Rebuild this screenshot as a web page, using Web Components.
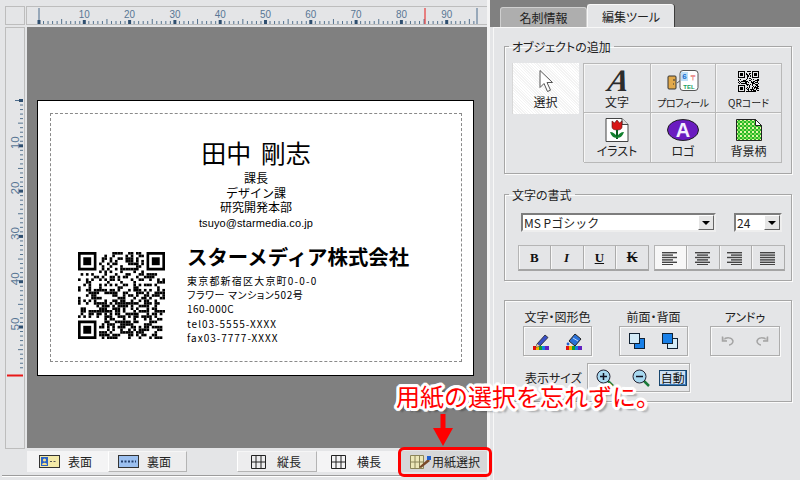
<!DOCTYPE html>
<html lang="ja">
<head>
<meta charset="utf-8">
<title>名刺</title>
<style>
html, body { margin: 0; padding: 0; width: 800px; height: 480px; overflow: hidden; background: #e4e5e7; }
</style>
</head>
<body>
<bc-app></bc-app>
<script>
const FONT = '"Noto Sans CJK JP", "Liberation Sans", sans-serif';

class Ruler extends HTMLElement {
	connectedCallback() {
		const vertical = this.hasAttribute('vertical');
		const len = vertical ? 420 : 460;
		const start = Number(this.getAttribute('start'));
		const stop = Number(this.getAttribute('stop'));
		const red = Number(this.getAttribute('red'));
		const step = 4.53;
		let marks = '';
		const line = (p, from, to, color, w) => vertical
			? `<line x1="${from}" x2="${to}" y1="${p}" y2="${p}" stroke="${color}" stroke-width="${w}"/>`
			: `<line x1="${p}" x2="${p}" y1="${from}" y2="${to}" stroke="${color}" stroke-width="${w}"/>`;
		for (let i = 0; start + i * step < stop - 1; i++) {
			const p = start + i * step;
			if (i == 0) marks += line(p, vertical ? 9 : 1, 17, '#4d6c8c', 1);
			if (i % 10 == 0) {
				marks += line(p, 13, 17, '#2f4f70', 3);
				if (i > 0) {
					const label = String(i);
					marks += vertical
						? `<text transform="translate(12.5 ${p - 3}) rotate(-90)" text-anchor="middle" textLength="13" lengthAdjust="spacingAndGlyphs">${label}</text>`
						: `<text x="${p}" y="11" text-anchor="middle" textLength="11" lengthAdjust="spacingAndGlyphs">${label}</text>`;
				}
			} else {
				marks += line(p, i % 5 == 0 ? 12 : 14, 17, '#55738f', 1);
			}
		}
		if (!vertical) marks += line(stop, 1, 17, '#4d6c8c', 1);
		marks += line(red, 1, 17, '#e81818', vertical ? 2 : 1);
		this.attachShadow({mode: 'open'}).innerHTML = `
		<style>
		:host { display: block; background: #e4e5e7; box-sizing: border-box; overflow: hidden; outline: 1px solid #bdbdbd; }
		svg { display: block; }
		text { font: 11px "Liberation Sans", sans-serif; fill: #587694; }
		</style>
		<svg width="${vertical ? 18 : len}" height="${vertical ? len : 17}">${marks}</svg>`;
	}
}
customElements.define('bc-ruler', Ruler);

class QrCode extends HTMLElement {
	connectedCallback() {
		const size = Number(this.getAttribute('size'));
		const n = Number(this.getAttribute('modules'));
		let seed = Number(this.getAttribute('seed') || 7);
		const rnd = () => { seed = (seed * 1103515245 + 12345) & 0x7fffffff; return (seed >> 12) % 100 / 100; };
		const finder = (x, y) => `<path d="M${x} ${y}h7v7h-7zM${x + 1} ${y + 1}v5h5v-5z" fill-rule="evenodd"/><rect x="${x + 2}" y="${y + 2}" width="3" height="3"/>`;
		let cells = finder(0, 0) + finder(n - 7, 0) + finder(0, n - 7);
		for (let y = 0; y < n; y++) {
			for (let x = 0; x < n; x++) {
				const inFinder = (x < 8 && y < 8) || (x >= n - 8 && y < 8) || (x < 8 && y >= n - 8);
				if (!inFinder && rnd() > 0.5) cells += `<rect x="${x}" y="${y}" width="1" height="1"/>`;
			}
		}
		this.attachShadow({mode: 'open'}).innerHTML = `
		<style>:host { display: block; width: ${size}px; height: ${size}px; } svg { display: block; }</style>
		<svg width="${size}" height="${size}" viewBox="0 0 ${n} ${n}" fill="#000">${cells}</svg>`;
	}
}
customElements.define('bc-qr', QrCode);

const cardTemplate = document.createElement('template');
cardTemplate.innerHTML = `
<style>
:host { display: block; width: 437px; height: 276px; box-sizing: border-box; background: #fff; border: 1px solid #000; padding: 12px 11px 13px 12px; font-family: ${FONT}; color: #000; }
.safe { height: 100%; box-sizing: border-box; border: 1px dashed #8a8a8a; padding-top: 24px; }
.name { font-size: 25px; line-height: 28px; text-align: center; word-spacing: 4px; }
.dept { margin-top: 6px; font: 12px/14.5px "Liberation Sans", "Noto Sans CJK JP", sans-serif; text-align: center; }
.mail { font: 11px/14.5px "Liberation Sans", sans-serif; letter-spacing: .1px; }
.lower { display: flex; gap: 22px; margin-top: 14px; padding-left: 27px; }
bc-qr { margin-top: 8px; }
.company { font-size: 20.4px; font-weight: 700; line-height: 24px; white-space: nowrap; font-feature-settings: normal; }
.address { margin-top: 6px; font-size: 10px; line-height: 14.2px; white-space: nowrap; }
.a1 { letter-spacing: 1.2px; }
.a2 { letter-spacing: .6px; }
.a3 { letter-spacing: .5px; }
.a4 { letter-spacing: 1px; }
</style>
<div class="safe">
	<div class="name">田中 剛志</div>
	<div class="dept">課長<br>デザイン課<br>研究開発本部<br><span class="mail">tsuyo@starmedia.co.jp</span></div>
	<div class="lower">
		<bc-qr size="87" modules="33"></bc-qr>
		<div>
			<div class="company">スターメディア株式会社</div>
			<div class="address"><span class="a1">東京都新宿区大京町0-0-0</span><br><span class="a2">フラワー マンション502号</span><br><span class="a3">160-000C</span><br><span class="a4">tel03-5555-XXXX</span><br><span class="a4">fax03-7777-XXXX</span></div>
		</div>
	</div>
</div>`;
class BusinessCard extends HTMLElement {
	constructor() {
		super();
		this.attachShadow({mode: 'open'}).appendChild(cardTemplate.content.cloneNode(true));
	}
}
customElements.define('bc-card', BusinessCard);

// bottom bar button under the canvas
const tabTemplate = document.createElement('template');
tabTemplate.innerHTML = `
<style>
:host { display: flex; align-items: center; box-sizing: border-box; height: 21px; font-size: 12px; color: #222; background: #ededee; border: 1px solid #b4b4b4; border-left-color: #fff; border-top-color: #f6f6f6; }
:host([active]) { background: #f4f4f5; border-color: #f4f4f5; }
:host([plain]) { background: #d6d7d8; border-color: #d6d7d8; }
.ic { display: flex; }
</style>
<span class="ic"><slot name="icon"></slot></span><slot></slot>`;
class BottomTab extends HTMLElement {
	constructor() {
		super();
		this.attachShadow({mode: 'open'}).appendChild(tabTemplate.content.cloneNode(true));
	}
}
customElements.define('bc-tab', BottomTab);

const groupTemplate = document.createElement('template');
groupTemplate.innerHTML = `
<style>
:host { display: block; width: 288px; }
fieldset { margin: 0; min-width: 0; box-sizing: border-box; border: 1px solid #a6a6a6; box-shadow: inset 1px 1px #fbfbfb, 1px 1px #fbfbfb; padding: 0; height: var(--h, auto); }
legend { margin-left: 4px; padding: 0 3px; font-size: 12px; line-height: 17px; color: #222; }
legend:empty { display: none; }
.body { padding: var(--pad, 0); }
</style>
<fieldset><legend></legend><div class="body"><slot></slot></div></fieldset>`;
class Group extends HTMLElement {
	constructor() {
		super();
		this.attachShadow({mode: 'open'}).appendChild(groupTemplate.content.cloneNode(true));
	}
	connectedCallback() {
		this.shadowRoot.querySelector('legend').textContent = this.getAttribute('legend') || '';
	}
}
customElements.define('bc-group', Group);

const toolTemplate = document.createElement('template');
toolTemplate.innerHTML = `
<style>
:host { display: flex; flex-direction: column; align-items: center; box-sizing: border-box; font-size: 12px; line-height: 14px; color: #222; white-space: nowrap; border-right: 1px solid #b8b8b8; border-bottom: 1px solid #b8b8b8; box-shadow: inset 1px 1px #f6f6f6; padding-top: 5px; }
:host([active]) { border: 0; background: #f7f7f7; box-shadow: inset 1px 0 #d8d8d8; padding-top: 6px; }
.ic { display: flex; height: 24px; align-items: center; }
.t { margin-top: 2px; }
</style>
<span class="ic"><slot name="icon"></slot></span><span class="t"><slot></slot></span>`;
class Tool extends HTMLElement {
	constructor() {
		super();
		this.attachShadow({mode: 'open'}).appendChild(toolTemplate.content.cloneNode(true));
	}
}
customElements.define('bc-tool', Tool);

class Combo extends HTMLElement {
	connectedCallback() {
		this.attachShadow({mode: 'open'}).innerHTML = `
		<style>
		:host { display: flex; box-sizing: border-box; height: 19px; background: #fff; border: 2px solid #7d7d7d; border-right-color: #eee; border-bottom-color: #eee; font: 12px/15px ${FONT}; color: #222; padding-left: 1px; }
		.v { flex: 1; white-space: nowrap; }
		.b { width: 16px; height: 15px; background: #e6e6e6; border: 1px solid; border-color: #fff #666 #666 #fff; box-sizing: border-box; display: flex; align-items: center; justify-content: center; }
		.b i { border: 4px solid transparent; border-top: 4px solid #000; border-bottom: 0; }
		</style>
		<span class="v">${this.getAttribute('value')}</span><span class="b"><i></i></span>`;
	}
}
customElements.define('bc-combo', Combo);

const segTemplate = document.createElement('template');
segTemplate.innerHTML = `
<style>
:host { display: flex; align-items: center; justify-content: center; box-sizing: border-box; width: 32.75px; height: 26px; font: 700 13px/1 "Liberation Serif", serif; color: #111; border-right: 1px solid #ababab; border-bottom: 2px solid #a4a4a4; border-top: 1px solid #b5b5b5; box-shadow: inset 1px 0 #f7f7f7; }
:host(:first-child) { border-left: 1px solid #b5b5b5; }
:host([active]) { background: #f7f7f7; }
</style>
<slot></slot>`;
class SegButton extends HTMLElement {
	constructor() {
		super();
		this.attachShadow({mode: 'open'}).appendChild(segTemplate.content.cloneNode(true));
	}
}
customElements.define('bc-seg', SegButton);

// etched box round the colour, order and undo icons
const etchTemplate = document.createElement('template');
etchTemplate.innerHTML = `
<style>
:host { display: flex; align-items: center; box-sizing: border-box; border: 1px solid #adadad; box-shadow: inset 1px 1px #fafafa, 1px 1px #fafafa; }
</style>
<slot></slot>`;
class EtchBox extends HTMLElement {
	constructor() {
		super();
		this.attachShadow({mode: 'open'}).appendChild(etchTemplate.content.cloneNode(true));
	}
}
customElements.define('bc-etch', EtchBox);

const rainbow = `<rect x="0" y="13" width="3" height="4" fill="#e01010"/><rect x="3" y="13" width="3" height="4" fill="#f0b000"/><rect x="6" y="13" width="3" height="4" fill="#10a030"/><rect x="9" y="13" width="3" height="4" fill="#1080e0"/><rect x="12" y="13" width="4" height="4" fill="#6020c0"/>`;
const alignIcon = (rows) => `<svg width="16" height="14">${rows.map((r, i) => `<rect x="${r[0]}" y="${i * 2.4 + 1}" width="${r[1]}" height="1.4" fill="#444"/>`).join('')}</svg>`;
const pageGrid = `<svg width="15" height="14"><path d="M.5 .5h14v13H.5zM5 .5v13M10 .5v13M.5 7h14" fill="none" stroke="#222"/></svg>`;

const appTemplate = document.createElement('template');
appTemplate.innerHTML = `
<style>
:host { display: grid; grid-template-columns: 490px 310px; width: 800px; height: 480px; position: relative; overflow: hidden; font-family: ${FONT}; font-feature-settings: "palt"; background: #e4e5e7; }
.left { display: grid; grid-template-columns: 18px 460px; grid-template-rows: 17px 421px 21px; column-gap: 3px; row-gap: 3px; padding: 7px 0 0 6px; height: 473px; box-sizing: border-box; position: relative; }
.canvas { background: #808080; padding: 73px 0 0 10px; grid-row: 2; grid-column: 2; }
.vr { grid-row: 2; grid-column: 1; margin-top: 1px; height: 420px; }
.corner { outline: 1px solid #bdbdbd; }
.bottom { grid-row: 3; grid-column: 2; display: flex; }
.bottom bc-tab { flex: none; }
.bottom svg { display: block; }
.rule { position: absolute; left: 2px; right: 2px; top: 475px; height: 1px; background: #9c9c9c; box-shadow: 0 1px #fff; }
.edge { position: absolute; left: 487px; top: 0; width: 3px; height: 480px; background: #f4f4f4; }
.right { background: #e4e5e7; display: flex; flex-direction: column; height: 480px; }
.strip { height: 27px; background: #808080; display: flex; align-items: flex-end; padding-left: 10px; flex: none; }
.strip div { width: 87px; text-align: center; box-sizing: border-box; font-size: 12px; color: #222; }
.strip .off { height: 20px; line-height: 19px; background: #aeaeae; border: 1px solid #cfcfcf; border-bottom: 0; border-radius: 3px 3px 0 0; }
.strip .on { height: 23px; line-height: 23px; background: #e4e5e7; border-top: 1px solid #f8f8f8; border-left: 1px solid #f8f8f8; box-shadow: 1px 0 #3c3c3c; border-radius: 3px 3px 0 0; }
.panel { flex: 1; margin-left: 3px; border-left: 1px solid #f8f8f8; border-top: 1px solid #f8f8f8; padding: 10px 0 0 10px; box-sizing: border-box; }
.g1 { --pad: 8px 0 10px 7px; --h: 136px; height: 137px; }
.g2 { --pad: 10px 0 9px 15px; --h: 95px; margin-top: 11px; height: 96px; }
.g3 { --pad: 8px 0 0 18px; --h: 102px; margin-top: 18px; }
.tools { display: flex; gap: 4px; }
.sel { width: 67px; height: 51px; background-image: repeating-linear-gradient(45deg, #fff 0 1px, #f3f3f3 1px 2px); }
.tgrid { display: grid; grid-template-columns: 67px 65px 66px; grid-template-rows: 49px 50px; border-left: 1px solid #b8b8b8; border-top: 1px solid #b8b8b8; height: 99px; box-sizing: border-box; }
.tiny { font-size: 10px; white-space: nowrap; }
.big-a { display: block; margin: -6px 0; }
.combos { display: flex; gap: 18px; padding-left: 1px; }
.segs { display: flex; gap: 5px; margin-top: 13px; margin-left: -2px; }
.segrow { display: flex; }
.b { font-weight: 700; }
.i { font-style: italic; }
.u { text-decoration: underline; }
.k { text-decoration: line-through; font-size: 14px; }
.cols { display: flex; }
.col { display: flex; flex-direction: column; width: 69px; align-items: center; font-size: 12px; line-height: 16px; color: #222; white-space: nowrap; }
.col bc-etch { width: 100%; height: 30px; margin-top: 1px; justify-content: center; gap: 17px; }
.col bc-etch.wide { gap: 20px; }
.zoomrow { display: flex; align-items: center; margin-top: 7px; font-size: 12px; color: #222; gap: 5px; padding-left: 2px; }
.zoomrow bc-etch { width: 103px; height: 29px; gap: 18px; padding-left: 8px; }
.auto { font-size: 12px; line-height: 14px; margin-left: -9px; padding: 0 1px; border: 1px solid #16456e; background: #cfe0f2; color: #111; box-shadow: inset -1px -1px #3a78b8; white-space: nowrap; }
.frame { position: absolute; left: 398px; top: 447px; width: 94px; height: 30px; box-sizing: border-box; border: 3px solid #f00; border-radius: 6px; }
.arrow { position: absolute; left: 433px; top: 414px; }
.note { position: absolute; left: 396px; top: 380px; font-size: 24px; line-height: 32px; color: #f00; white-space: nowrap; font-feature-settings: normal;
	text-shadow: 3px 0 #fff, -3px 0 #fff, 0 3px #fff, 0 -3px #fff, 2px 2px #fff, -2px 2px #fff, 2px -2px #fff, -2px -2px #fff, 3px 1px #fff, -3px 1px #fff, 3px -1px #fff, -3px -1px #fff, 1px 3px #fff, -1px 3px #fff, 1px -3px #fff, -1px -3px #fff, 4px 4px 2px rgba(0,0,0,.35); }
</style>
<div class="left">
	<div class="corner"></div>
	<bc-ruler start="12" stop="450" red="398"></bc-ruler>
	<bc-ruler class="vr" vertical start="72.5" stop="345" red="347.5"></bc-ruler>
	<div class="canvas"><bc-card></bc-card></div>
	<div class="bottom">
		<bc-tab active style="width:81px;padding-left:11px;gap:8px">
			<svg slot="icon" width="21" height="13"><rect x=".5" y=".5" width="20" height="12" fill="#f3e9a8" stroke="#333"/><rect x="2" y="2" width="7" height="9" fill="#2a62c8"/><circle cx="5.5" cy="5" r="1.6" fill="#f4e08a"/><path d="M3 10c0-3 5-3 5 0z" fill="#f4e08a"/><path d="M11 6.500h7" stroke="#555" stroke-dasharray="2 1.500"/></svg>表面</bc-tab>
		<bc-tab style="width:79px;padding-left:9px;gap:8px">
			<svg slot="icon" width="21" height="13"><rect x=".5" y=".5" width="20" height="12" fill="#9cc0f0" stroke="#333"/><path d="M3 6.500h15" stroke="#24406e" stroke-width="2" stroke-dasharray="2 1.500"/></svg>裏面</bc-tab>
		<div style="width:50px"></div>
		<bc-tab style="width:80px;padding-left:13px;gap:11px"><span slot="icon" id="g1"></span>縦長</bc-tab>
		<bc-tab active style="width:81px;padding-left:13px;gap:11px"><span slot="icon" id="g2"></span>横長</bc-tab>
		<bc-tab plain style="width:89px;padding-left:11px">
			<svg slot="icon" width="22" height="14"><path d="M.5 .5h13v13H.5zM5 .5v13M9.500 .5v13M.5 7h13" fill="#ece7b8" stroke="#8a8458"/><path d="M9 12l9-8 2 2-9 7z" fill="#7a4a28"/><rect x="17" y="1" width="4" height="4" fill="#2060d0"/></svg>用紙選択</bc-tab>
	</div>
	<div class="rule"></div>
	<div class="edge"></div>
</div>
<div class="right">
	<div class="strip"><div class="off">名刺情報</div><div class="on">編集ツール</div></div>
	<div class="panel">
		<bc-group class="g1" legend="オブジェクトの追加">
			<div class="tools">
				<bc-tool class="sel" active>
					<svg slot="icon" width="16" height="24"><path d="M2 1.500v17l4-4 3.500 8 3-1.300-3.500-7.700h5.500z" fill="#fff" stroke="#555"/></svg>選択</bc-tool>
				<div class="tgrid">
					<bc-tool>
						<svg class="big-a" slot="icon" width="30" height="36"><text x="0" y="0" transform="translate(15 28) skewX(-10)" text-anchor="middle" font-family="Liberation Serif" font-weight="700" font-style="italic" font-size="31" fill="#2c2c2c">A</text></svg>文字</bc-tool>
					<bc-tool>
						<svg slot="icon" width="32" height="24"><rect x="1" y="7" width="8" height="13" rx="1" fill="#e2a94a" stroke="#333"/><path d="M6 11h2M6 15h1" stroke="#333"/><path d="M10 14l4-3" stroke="#555"/><rect x="13" y="1.500" width="18" height="20" rx="3" fill="#fff" stroke="#555"/><rect x="14" y="3" width="7" height="9" fill="#bfe0f8"/><text x="17.500" y="10" text-anchor="middle" font-family="Liberation Sans" font-weight="700" font-size="8" fill="#1a70d0">6</text><text x="26" y="11" text-anchor="middle" font-family="Noto Sans CJK JP" font-size="7" fill="#e04040">〒</text><text x="22" y="19.500" text-anchor="middle" font-family="Liberation Sans" font-weight="700" font-size="6" fill="#20a060">TEL</text></svg><span class="tiny" style="letter-spacing:-.4px">プロフィール</span></bc-tool>
					<bc-tool><bc-qr slot="icon" size="21" modules="21" seed="91"></bc-qr><span class="tiny">QRコード</span></bc-tool>
					<bc-tool>
						<svg slot="icon" width="24" height="24"><path d="M1 .5h16l6 6v17H1z" fill="#fff" stroke="#444"/><path d="M17 .5v6h6" fill="#ddd" stroke="#444"/><path d="M7 3l2.500 2 2.500-3 2.500 3 2.500-2v6c0 2-2 3-5 3s-5-1-5-3z" fill="#d81818" stroke="#501010" stroke-width=".6"/><path d="M12 12v9" stroke="#0a5a20" stroke-width="2"/><path d="M12 20c-4 0-6-3-7-6 3 0 6 2 7 5 1-3 4-5 7-5-1 3-3 6-7 6z" fill="#12802e"/></svg>イラスト</bc-tool>
					<bc-tool>
						<svg slot="icon" width="32" height="24"><ellipse cx="16" cy="12" rx="15.500" ry="10.500" fill="#6a1cc0" stroke="#222"/><text x="16" y="19" text-anchor="middle" font-family="Liberation Sans" font-weight="700" font-size="20" fill="#f4f0ff">A</text></svg>ロゴ</bc-tool>
					<bc-tool>
						<svg slot="icon" width="26" height="22"><defs><pattern id="chk" width="4" height="4" patternUnits="userSpaceOnUse"><rect width="4" height="4" fill="#2ab52a"/><rect width="2" height="2" fill="#e6f8a8"/><rect x="2" y="2" width="2" height="2" fill="#7ade50"/></pattern></defs><path d="M.5 .5h19l6 6v15H.5z" fill="url(#chk)" stroke="#222"/><path d="M19.500 .5v6h6z" fill="#fff" stroke="#222"/></svg>背景柄</bc-tool>
				</div>
			</div>
		</bc-group>
		<bc-group class="g2" legend="文字の書式">
			<div class="combos">
				<bc-combo style="width:195px" value="MS Pゴシック"></bc-combo>
				<bc-combo style="width:48px" value="24"></bc-combo>
			</div>
			<div class="segs">
				<div class="segrow">
					<bc-seg><span class="b">B</span></bc-seg>
					<bc-seg><span class="i">I</span></bc-seg>
					<bc-seg><span class="u">U</span></bc-seg>
					<bc-seg><span class="k">K</span></bc-seg>
				</div>
				<div class="segrow" id="aligns"></div>
			</div>
		</bc-group>
		<bc-group class="g3">
			<div class="cols">
				<div class="col">文字・図形色
					<bc-etch>
						<svg width="16" height="17">${rainbow}<path d="M4 11l8-9 3 2.500-8 8.500-4 1z" fill="#3a50c8" stroke="#222" stroke-width=".8"/><path d="M4 11l-1 3 4-1z" fill="#f0d8a0"/></svg>
						<svg width="16" height="17">${rainbow}<path d="M9 1l6 5-6 7-6-5z" fill="#2a70d8" stroke="#222"/><path d="M7 5l5 3" stroke="#bcd8f8"/><circle cx="2" cy="11" r="1.400" fill="#2060d0"/></svg>
					</bc-etch>
				</div>
				<div class="col" style="margin-left:27px">前面・背面
					<bc-etch>
						<svg width="16" height="16"><rect x="5.500" y="5.500" width="10" height="10" fill="#1880e8" stroke="#123"/><rect x=".5" y=".5" width="10" height="10" fill="#d4ecf8" stroke="#123"/></svg>
						<svg width="16" height="16"><rect x="5.500" y="5.500" width="10" height="10" fill="#d4ecf8" stroke="#123"/><rect x=".5" y=".5" width="10" height="10" fill="#1880e8" stroke="#123"/></svg>
					</bc-etch>
				</div>
				<div class="col" style="margin-left:22px;width:70px">アンドゥ
					<bc-etch class="wide">
						<svg width="14" height="12" fill="none" stroke="#a4a4a4" stroke-width="1.500"><path d="M2 5c3-3 9-3 10 1 0 2-2 4-4 4"/><path d="M1.500 1.500v4.500h4.500" fill="#c8c8c8"/></svg>
						<svg width="14" height="12" fill="none" stroke="#a4a4a4" stroke-width="1.500"><path d="M12 5c-3-3-9-3-10 1 0 2 2 4 4 4"/><path d="M12.500 1.500v4.500h-4.500" fill="#c8c8c8"/></svg>
					</bc-etch>
				</div>
			</div>
			<div class="zoomrow">表示サイズ
				<bc-etch>
					<svg width="18" height="18"><path d="M11 11l6 6" stroke="#1a7a3a" stroke-width="2.500"/><circle cx="7.500" cy="7.500" r="6.500" fill="#a8d8f0" stroke="#223"/><path d="M4 7.500h7M7.500 4v7" stroke="#112" stroke-width="1.500"/></svg>
					<svg width="18" height="18"><path d="M11 11l6 6" stroke="#1a7a3a" stroke-width="2.500"/><circle cx="7.500" cy="7.500" r="6.500" fill="#a8d8f0" stroke="#223"/><path d="M4 7.500h7" stroke="#112" stroke-width="1.500"/></svg>
					<span class="auto">自動</span>
				</bc-etch>
			</div>
		</bc-group>
	</div>
</div>
<div class="frame"></div>
<svg class="arrow" width="20" height="33"><path d="M7.500 0h5v14h7.500l-10 18-10-18h7.500z" fill="#f00"/></svg>
<div class="note">用紙の選択を忘れずに。</div>`;

class App extends HTMLElement {
	constructor() {
		super();
		const root = this.attachShadow({mode: 'open'});
		root.appendChild(appTemplate.content.cloneNode(true));
		root.querySelector('#g1').innerHTML = pageGrid;
		root.querySelector('#g2').innerHTML = pageGrid;
		const aligns = [
			[[0,15],[0,11],[0,15],[0,11],[0,15],[0,11]],
			[[0,15],[2,11],[0,15],[2,11],[0,15],[2,11]],
			[[0,15],[4,11],[0,15],[4,11],[0,15],[4,11]],
			[[0,15],[0,15],[0,15],[0,15],[0,15],[0,15]]
		];
		const row = root.querySelector('#aligns');
		aligns.forEach((rows, i) => {
			const seg = document.createElement('bc-seg');
			if (i == 0) seg.setAttribute('active', '');
			seg.innerHTML = alignIcon(rows);
			row.appendChild(seg);
		});
	}
}
customElements.define('bc-app', App);
</script>
</body>
</html>
